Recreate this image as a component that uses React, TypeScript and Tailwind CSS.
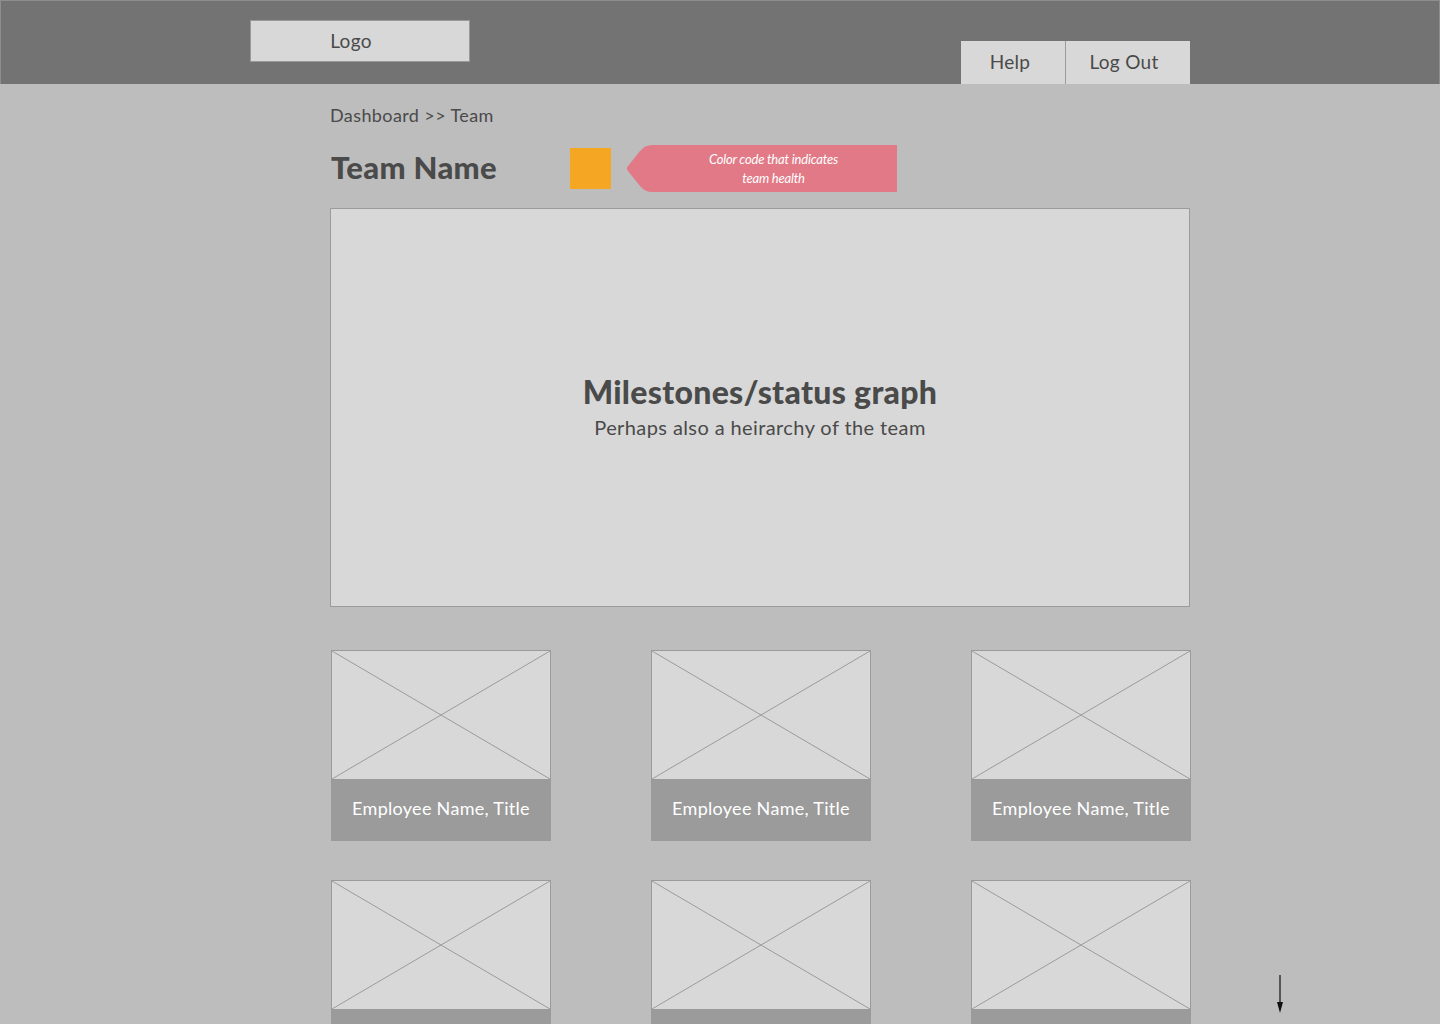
const font = { fontFamily: '"Lato", "Noto Sans", sans-serif' };

const PlaceholderImage = () => (
    <svg className="block h-full w-full" viewBox="0 0 218 128" preserveAspectRatio="none">
        <line x1="0" y1="0" x2="218" y2="128" stroke="#9b9b9b" strokeWidth="1" />
        <line x1="218" y1="0" x2="0" y2="128" stroke="#9b9b9b" strokeWidth="1" />
    </svg>
);

const EmployeeCard = () => (
    <div className="flex w-[220px] flex-col border border-[#9b9b9b]">
        <div className="h-[128px] bg-[#d8d8d8]">
            <PlaceholderImage />
        </div>
        <div className="flex h-[61px] items-center justify-center bg-[#9b9b9b] pb-[2px] text-[18px] tracking-[0.3px] text-white">
            Employee Name, Title
        </div>
    </div>
);

export default function App() {
    return (
        <div className="relative min-h-screen w-full overflow-hidden bg-[#bdbdbd] text-[#4a4a4a]" style={font}>
            {/* Header */}
            <div className="h-[84px] border border-[#8e8e8e] border-b-0 bg-[#737373]">
                <div className="mx-auto flex h-full w-[940px] items-start justify-between pt-[19px]">
                    <div className="flex h-[42px] w-[220px] items-center justify-center border border-[#999] bg-[#d8d8d8] pr-[18px] text-[19px] tracking-[0.3px]">
                        Logo
                    </div>
                    <div className="mt-[21px] flex h-[43px] bg-[#d8d8d8] text-[19px] tracking-[0.3px]">
                        <div className="flex w-[105px] items-center justify-center border-r border-[#9b9b9b] pr-[6px]">Help</div>
                        <div className="flex w-[124px] items-center justify-center pr-[8px]">Log Out</div>
                    </div>
                </div>
            </div>

            {/* Content */}
            <div className="ml-[330px] w-[861px]">
                <div className="pt-[20px] text-[18px] leading-[22px] tracking-[0.4px]">Dashboard &gt;&gt; Team</div>

                <div className="mt-[19px] flex h-[47px] items-center">
                    <h1 className="w-[240px] pl-px pb-[2px] text-[31px] font-black tracking-[0.3px] text-[#4a4a4a]">Team Name</h1>
                    <div className="h-[41px] w-[41px] bg-[#f5a623]" />
                    <div className="relative ml-[15px] flex h-[47px] w-[271px] items-center justify-center pl-[24px]">
                        <svg className="absolute inset-0" width="271" height="47" viewBox="0 0 271 47">
                            <path
                                d="M271 0 L26 0 Q19 0 14 6 L2 21 Q0 23.5 2 26 L14 41 Q19 47 26 47 L271 47 Z"
                                fill="#e27986"
                            />
                        </svg>
                        <p className="relative text-center text-[13px] italic leading-[19px] tracking-[-0.2px] text-white">
                            Color code that indicates
                            <br />
                            team health
                        </p>
                    </div>
                </div>

                <div className="mt-[16px] flex h-[399px] w-[860px] flex-col items-center justify-center border border-[#9b9b9b] bg-[#d8d8d8]">
                    <h2 className="text-[32px] font-black leading-[38px] tracking-[0.3px]">Milestones/status graph</h2>
                    <p className="mt-[1px] text-[20px] tracking-[0.4px]">Perhaps also a heirarchy of the team</p>
                </div>

                <div className="mt-[43px] grid w-[861px] grid-cols-[220px_220px_220px] justify-between gap-y-[39px] pl-px">
                    <EmployeeCard />
                    <EmployeeCard />
                    <EmployeeCard />
                    <EmployeeCard />
                    <EmployeeCard />
                    <EmployeeCard />
                </div>
            </div>

            {/* Scroll indicator */}
            <svg className="absolute left-[1275px] top-[975px]" width="10" height="40" viewBox="0 0 10 40">
                <line x1="5" y1="0" x2="5" y2="30" stroke="#111" strokeWidth="1.2" />
                <path d="M2 27 L8 27 L5 38 Z" fill="#111" />
            </svg>
        </div>
    );
}
